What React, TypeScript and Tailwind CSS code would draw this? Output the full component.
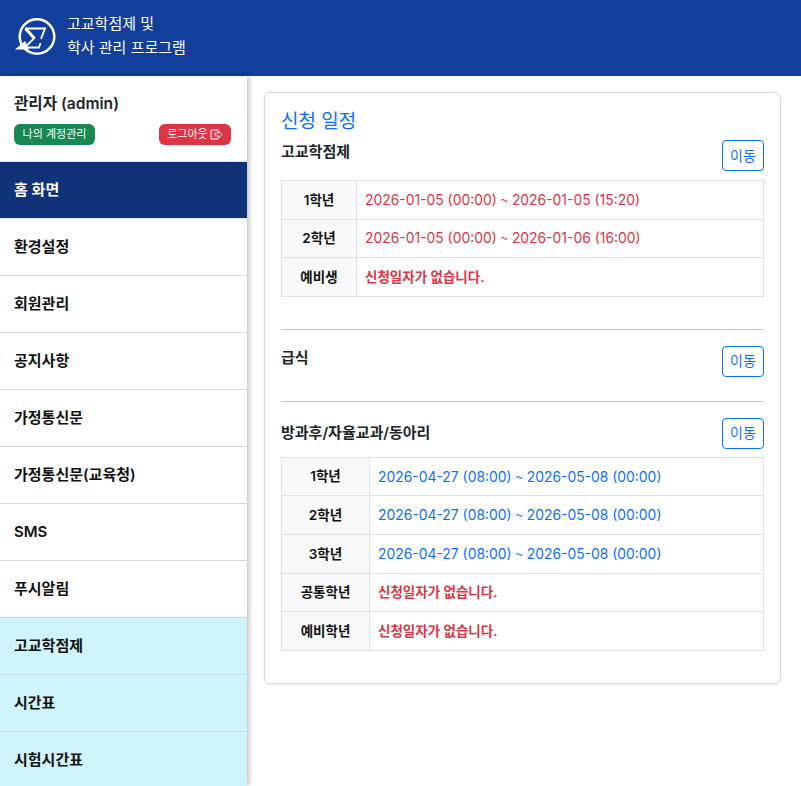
import React from 'react'

const menus = [
    { label: '환경설정' },
    { label: '회원관리' },
    { label: '공지사항' },
    { label: '가정통신문' },
    { label: '가정통신문(교육청)' },
    { label: 'SMS' },
    { label: '푸시알림' },
    { label: '고교학점제', sky: true },
    { label: '시간표', sky: true },
    { label: '시험시간표', sky: true },
]

type Row = { name: string; from?: string; to?: string; color: 'red' | 'blue' | 'none' }

const credits: Row[] = [
    { name: '1학년', from: '2026-01-05 (00:00)', to: '2026-01-05 (15:20)', color: 'red' },
    { name: '2학년', from: '2026-01-05 (00:00)', to: '2026-01-06 (16:00)', color: 'red' },
    { name: '예비생', color: 'none' },
]

const afterSchool: Row[] = [
    { name: '1학년', from: '2026-04-27 (08:00)', to: '2026-05-08 (00:00)', color: 'blue' },
    { name: '2학년', from: '2026-04-27 (08:00)', to: '2026-05-08 (00:00)', color: 'blue' },
    { name: '3학년', from: '2026-04-27 (08:00)', to: '2026-05-08 (00:00)', color: 'blue' },
    { name: '공통학년', color: 'none' },
    { name: '예비학년', color: 'none' },
]

const Logo = () => (
    <svg width="46" height="42" viewBox="0 0 46 42" fill="none" className="-mt-[3px] shrink-0">
        <circle cx="23" cy="20.5" r="17.3" stroke="#fff" strokeWidth="2.5" />
        {/* sigma */}
        <path d="M11 12.5 H31 L27 23" stroke="#fff" strokeWidth="1.8" />
        <path d="M11.5 12.5 L20.5 22.5" stroke="#fff" strokeWidth="3" />
        <path d="M20.5 22 L10.5 31.5 H25 L26.5 27" stroke="#fff" strokeWidth="1.8" />
        <path d="M1 33.5 L11 25 L15 33.5 Z" fill="#fff" />
    </svg>
)

const LogoutIcon = () => (
    <svg width="13" height="11" viewBox="0 0 13 11" fill="none" className="ml-0.5">
        <path d="M8 2.5 V1 H1 V10 H8 V8.5" stroke="#fff" strokeWidth="1" />
        <path d="M5 4 H9 V2 L12 5.5 L9 9 V7 H5 Z" stroke="#fff" strokeWidth="0.9" />
    </svg>
)

const MoveButton = () => (
    <button className="h-[31px] w-[42px] rounded-[4px] border border-[#0d6efd] bg-white text-[14px] leading-none text-[#0d6efd]">
        이동
    </button>
)

const Schedule = ({ rows, head }: { rows: Row[]; head: string }) => (
    <table className="w-full border-collapse text-[13.9px]">
        <tbody>
            {rows.map((r) => (
                <tr key={r.name} className="h-[38.6px]">
                    <th className={`${head} border border-[#dee2e6] bg-[#f8f9fa] text-center text-[13.5px] font-semibold text-[#111]`}>
                        {r.name}
                    </th>
                    <td className="border border-[#dee2e6] px-2 pt-px">
                        {r.color === 'none' ? (
                            <span className="text-[13.5px] font-semibold text-[#dc3545]">신청일자가 없습니다.</span>
                        ) : (
                            <span className={r.color === 'red' ? 'text-[#dc3545]' : 'text-[#0d6efd]'}>
                                {r.from} <span className="font-['Noto_Sans_CJK_KR'] text-[13px]">~</span> {r.to}
                            </span>
                        )}
                    </td>
                </tr>
            ))}
        </tbody>
    </table>
)

const App = () => {
    return (
        <div className="h-[786px] w-[801px] overflow-hidden bg-white font-['Inter','Noto_Sans_CJK_KR',sans-serif] text-[#212529]">
            <header className="flex h-[76px] items-center gap-[7px] bg-[#123f9b] pl-[14px]">
                <Logo />
                <div className="-mt-[5px] text-[15px] leading-[24px] text-white">
                    <div>고교학점제 및</div>
                    <div>학사 관리 프로그램</div>
                </div>
            </header>
            <div className="flex">
                <aside className="h-[710px] w-[247px] shrink-0 overflow-hidden shadow-[2px_0_5px_rgba(0,0,0,0.25)]">
                    <div className="h-[86px] border-b border-[#dee2e6] px-[14px] pt-[17px]">
                        <div className="text-[15.6px] leading-[22px] font-semibold">관리자 (admin)</div>
                        <div className="mt-[9px] flex items-center justify-between pr-[2px]">
                            <span className="flex h-[21px] w-[81px] items-center justify-center rounded-[6px] bg-[#198754] text-[11px] text-white">
                                나의 계정관리
                            </span>
                            <span className="flex h-[21px] w-[72px] items-center justify-center rounded-[6px] bg-[#dc3545] text-[11px] text-white">
                                로그아웃
                                <LogoutIcon />
                            </span>
                        </div>
                    </div>
                    <div className="flex h-[57px] items-center border-b border-[#dee2e6] bg-[#0f3278] px-[14px] text-[15px] font-semibold text-white">
                        홈 화면
                    </div>
                    {menus.map((m) => (
                        <div
                            key={m.label}
                            className={`flex h-[57px] items-center border-b border-[#d3d6da] px-[14px] text-[15px] font-semibold text-[#111] ${m.sky ? 'bg-[#cff4fc]' : 'bg-white'}`}
                        >
                            {m.label}
                        </div>
                    ))}
                </aside>
                <main className="flex-1 pt-4 pr-5 pl-[17px]">
                    <div className="h-[592px] rounded-[6px] border border-[#d3d6da] px-4 pt-[15px] shadow-[0_1px_3px_rgba(0,0,0,0.08)]">
                        <h2 className="text-[19px] leading-[28px] font-normal text-[#0d6efd]">신청 일정</h2>
                        <div className="mt-[4px] mb-[9px] flex items-start justify-between">
                            <div className="text-[15px] leading-[24px] font-semibold">고교학점제</div>
                            <MoveButton />
                        </div>
                        <Schedule rows={credits} head="w-[75px]" />
                        <hr className="mt-8 mb-4 border-[#c4c7ca]" />
                        <div className="mb-6 flex items-start justify-between">
                            <div className="text-[15px] leading-[24px] font-semibold">급식</div>
                            <MoveButton />
                        </div>
                        <hr className="mb-4 border-[#c4c7ca]" />
                        <div className="mb-2 flex items-center justify-between">
                            <div className="text-[15px] leading-[24px] font-semibold">방과후/자율교과/동아리</div>
                            <MoveButton />
                        </div>
                        <Schedule rows={afterSchool} head="w-[88px]" />
                    </div>
                </main>
            </div>
        </div>
    )
}

export default App
